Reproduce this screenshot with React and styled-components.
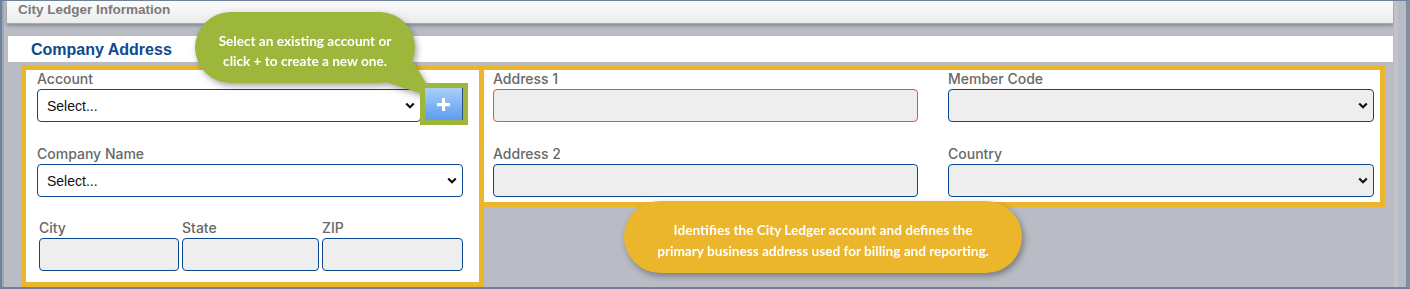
import styled, { createGlobalStyle } from "styled-components";

const Global = createGlobalStyle`
    body {
        margin: 0;
        background: #b9bcc5;
        font-family: "Liberation Sans", Arial, sans-serif;
    }
`;

const Frame = styled.div`
    position: relative;
    box-sizing: border-box;
    width: 1410px;
    height: 289px;
    display: flex;
    background: #b9bcc5;
    border: 2px solid #6f8197;
    border-top-width: 1px;
    border-right: 4px solid #7f8fa2;
    box-shadow: inset 2px 0 0 #9ca7b6;
    overflow: hidden;
`;

const Main = styled.div`
    flex: 1;
    display: flex;
    flex-direction: column;
`;

const Gutter = styled.div`
    width: 12px;
    border-left: 4px solid #c0c3cb;
    box-sizing: border-box;
`;

const TopBar = styled.div`
    height: 22px;
    margin: 0 1px 0 5px;
    padding-left: 11px;
    background: linear-gradient(#fbfbfb, #ececec);
    border-bottom: 1px solid #a9a9a9;
    box-shadow: 0 2px 3px rgba(0, 0, 0, 0.25);
    font-size: 13.5px;
    font-weight: 700;
    line-height: 17px;
    color: #7a7a7a;
`;

const SectionBar = styled.div`
    height: 27px;
    margin: 12px 1px 0 6px;
    padding: 1px 0 0 23px;
    box-sizing: border-box;
    background: #fff;
    font-size: 16px;
    font-weight: 700;
    line-height: 25px;
    color: #0d4a8f;
`;

const Boxes = styled.div`
    display: flex;
    align-items: flex-start;
    margin: 3px 0 0 19px;
`;

const LeftBox = styled.div`
    width: 463px;
    height: 222px;
    box-sizing: border-box;
    border: 5px solid #ebb62b;
    background: #fff;
    padding: 1px 16px 0 11px;
    display: flex;
    flex-direction: column;
    gap: 24px;
`;

const RightBox = styled.div`
    width: 901px;
    height: 142px;
    box-sizing: border-box;
    border: 5px solid #ebb62b;
    border-left: 0;
    background: #fff;
    padding: 1px 6px 0 9px;
    display: grid;
    grid-template-columns: 425px 426px;
    column-gap: 30px;
    row-gap: 24px;
    align-content: start;
`;

const Field = styled.div`
    display: flex;
    flex-direction: column;
    gap: 3px;
`;

const Label = styled.label`
    font-family: Inter, "Liberation Sans", sans-serif;
    font-size: 14px;
    font-weight: 500;
    line-height: 15px;
    color: #686868;
    white-space: nowrap;
`;

const Input = styled.div`
    height: 33px;
    box-sizing: border-box;
    border: 1px solid ${p => (p.$error ? "#e3552f" : "#0b4690")};
    border-radius: 4px;
    background: #eeeeee;
`;

const SelectBox = styled.div`
    flex-grow: 1;
    min-width: 0;
    height: 33px;
    box-sizing: border-box;
    border: 1px solid #0b4690;
    border-radius: 4px;
    background: ${p => (p.$empty ? "#eeeeee" : "#fff")};
    display: flex;
    align-items: center;
    justify-content: space-between;
    padding: 0 5px 0 9px;
    font-size: 14px;
    color: #111;
`;

const Row = styled.div`
    display: flex;
    align-items: flex-start;
    gap: 4px;
`;

const AddButton = styled.button`
    position: relative;
    z-index: 3;
    flex: none;
    width: 38px;
    height: 32px;
    margin-top: -1px;
    padding: 0;
    border: 0;
    border-right: 1px solid #2d4f80;
    background: linear-gradient(#a8cff8, #5d9df0);
    outline: 5px solid #9db63c;
    display: flex;
    align-items: center;
    justify-content: center;
`;

const Triple = styled.div`
    display: grid;
    grid-template-columns: 140px 137px 141px;
    column-gap: 3px;
    padding-left: 2px;
    margin-top: -1px;
`;

const Tip = styled.div`
    position: absolute;
    z-index: 2;
    left: ${p => p.$x}px;
    top: ${p => p.$y}px;
    width: ${p => p.$w}px;
    height: ${p => p.$h}px;
    filter: drop-shadow(2px 3px 3px rgba(0, 0, 0, 0.35));
`;

const Bubble = styled.div`
    position: relative;
    height: 100%;
    box-sizing: border-box;
    border-radius: 40px;
    background: ${p => p.$color};
    padding-top: ${p => p.$pad}px;
    display: flex;
    flex-direction: column;
    justify-content: center;
    align-items: center;
    font-family: Lato, "Open Sans", sans-serif;
    font-weight: 700;
    font-size: 13.6px;
    line-height: ${p => p.$lh}px;
    color: #fff;
    text-align: center;
    white-space: nowrap;
`;

const Tail = styled.svg`
    position: absolute;
    left: 0;
    top: 0;
    overflow: visible;
`;

const Chevron = () => (
    <svg width="10" height="7" viewBox="0 0 10 7">
        <polyline points="1.2,1.5 5,5.2 8.8,1.5" fill="none" stroke="#111" strokeWidth="2.2" />
    </svg>
);

const Plus = () => (
    <svg width="13" height="13" viewBox="0 0 13 13">
        <rect x="5" y="0" width="3.2" height="13" fill="#fff" />
        <rect x="0" y="5" width="13" height="3.2" fill="#fff" />
    </svg>
);

export default function App() {
    return <>
        <Global />
        <Frame>
            <Main>
                <TopBar>City Ledger Information</TopBar>
                <SectionBar>Company Address</SectionBar>
                <Boxes>
                    <LeftBox>
                        <Field>
                            <Label>Account</Label>
                            <Row>
                                <SelectBox>Select...<Chevron /></SelectBox>
                                <AddButton aria-label="Add account"><Plus /></AddButton>
                            </Row>
                        </Field>
                        <Field>
                            <Label>Company Name</Label>
                            <SelectBox>Select...<Chevron /></SelectBox>
                        </Field>
                        <Triple>
                            {["City", "State", "ZIP"].map(name => <Field key={name}>
                                <Label>{name}</Label>
                                <Input />
                            </Field>)}
                        </Triple>
                    </LeftBox>
                    <RightBox>
                        <Field>
                            <Label>Address 1</Label>
                            <Input $error />
                        </Field>
                        <Field>
                            <Label>Member Code</Label>
                            <SelectBox $empty><span /><Chevron /></SelectBox>
                        </Field>
                        <Field>
                            <Label>Address 2</Label>
                            <Input />
                        </Field>
                        <Field>
                            <Label>Country</Label>
                            <SelectBox $empty><span /><Chevron /></SelectBox>
                        </Field>
                    </RightBox>
                </Boxes>
            </Main>
            <Gutter />

            <Tip $x={193} $y={11} $w={220} $h={71}>
                <Tail width="250" height="90">
                    <polygon points="172,64 211,38 240,86" fill="#9db63c" />
                </Tail>
                <Bubble $color="#9db63c" $pad={7} $lh={20}>
                    <span>Select an existing account or</span>
                    <span>click + to create a new one.</span>
                </Bubble>
            </Tip>

            <Tip $x={622} $y={200} $w={398} $h={72}>
                <Bubble $color="#ebb62b" $pad={8} $lh={21}>
                    <span>Identifies the City Ledger account and defines the</span>
                    <span>primary business address used for billing and reporting.</span>
                </Bubble>
            </Tip>
        </Frame>
    </>;
}
